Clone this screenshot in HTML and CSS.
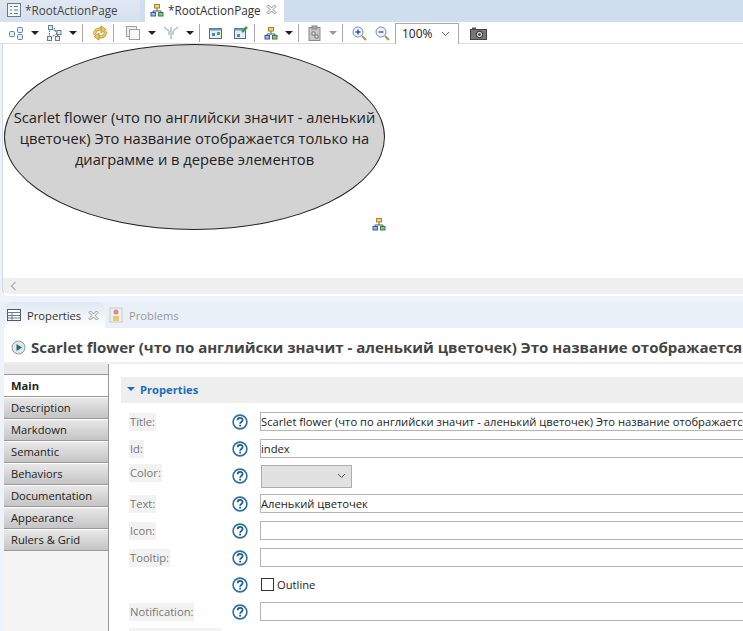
FILE: index.html
```html
<!DOCTYPE html>
<html>
	<head>
		<meta charset="UTF-8">
		<title>RootActionPage</title>
		<link rel="stylesheet" href="styles.css">
	</head>
	<body>
		<svg class="defs" width="0" height="0">
			<symbol id="org" viewBox="0 0 14 14">
				<path d="M7 5v3M3 10V8h8v2" fill="none" stroke="#3a5a8c"/>
				<rect x="4.500" y="1.500" width="5" height="3.500" fill="#f5d36a" stroke="#a8862c"/>
				<rect x="1" y="9.500" width="4.500" height="3.500" fill="#9db9e6" stroke="#3a5a9c"/>
				<rect x="8.500" y="9.500" width="4.500" height="3.500" fill="#8cc084" stroke="#3f7a3a"/>
			</symbol>
			<symbol id="help" viewBox="0 0 16 16">
				<circle cx="8" cy="8" r="6.900" fill="#fff" stroke="#2f6f9f" stroke-width="1.600"/>
				<path d="M5.600 6.300c0-3.200 5-3.200 5-.2 0 1.900-2.500 1.800-2.500 3.700" fill="none" stroke="#1f5c8c" stroke-width="1.800"/>
				<rect x="7.200" y="10.700" width="1.800" height="1.800" fill="#1f5c8c"/>
			</symbol>
			<symbol id="close" viewBox="0 0 11 11">
				<path d="M1 2.500 2.500 1 5.500 4 8.500 1 10 2.500 7 5.500 10 8.500 8.500 10 5.500 7 2.500 10 1 8.500 4 5.500 1 2.500Z" fill="#fff" stroke="#8a8a8a"/>
			</symbol>
		</svg>

		<div class="editor">
			<div class="tabs">
				<div class="tab tab-off">
					<svg class="tab-ico" width="14" height="14" viewBox="0 0 14 14"><rect x=".5" y=".5" width="13" height="13" fill="#f4f6f8" stroke="#6a7a8a"/><path d="M3 3.500h2M7 3.500h4M3 7h2M7 7h4M3 10.500h2M7 10.500h4" stroke="#4f8a6a" stroke-width="1.200"/></svg>
					<span>*RootActionPage</span>
				</div>
				<div class="tab tab-on">
					<svg class="tab-ico" width="14" height="14"><use href="#org"/></svg>
					<span>*RootActionPage</span>
					<svg class="tab-x" width="11" height="11"><use href="#close"/></svg>
				</div>
			</div>

			<div class="toolbar">
				<svg class="ico first" width="16" height="16" viewBox="0 0 16 16"><g fill="#e6eef8" stroke="#5c7f9f"><rect x="1.500" y="6.500" width="5" height="5" rx="1"/><rect x="9.500" y="2.500" width="5" height="5" rx="1"/><rect x="9.500" y="9.500" width="5" height="5" rx="1"/></g></svg>
				<i class="arr"></i>
				<svg class="ico" width="16" height="16" viewBox="0 0 16 16"><path d="M4 3 13 8M4 3 3 13M13 8 3 13M8 3l5 10" stroke="#555" stroke-dasharray="1.500 1" fill="none"/><g fill="#e6eef8" stroke="#5c7f9f"><rect x="2.500" y=".5" width="4" height="4"/><rect x="11" y="5.500" width="4" height="4"/><rect x="1.500" y="11.500" width="4" height="4"/><rect x="9.500" y="11.500" width="4" height="4"/></g></svg>
				<i class="arr"></i>
				<i class="sep"></i>
				<svg class="ico after-sep" width="16" height="16" viewBox="0 0 16 16"><g id="sync-half"><path d="M2.500 9.500C2.500 6 5.500 3.500 9 4.200" fill="none" stroke="#a8862c" stroke-width="3"/><path d="M2.500 9.500C2.500 6 5.500 3.500 9 4.200" fill="none" stroke="#f3cb55" stroke-width="1.800"/><path d="M9 .8 14 4.500 9 8Z" fill="#f3cb55" stroke="#a8862c" stroke-width=".8"/></g><use href="#sync-half" transform="rotate(180 8 8)"/></svg>
				<i class="sep"></i>
				<svg class="ico after-sep wide" width="16" height="16" viewBox="0 0 16 16"><rect x="1.500" y="1.500" width="10" height="10" fill="#eee" stroke="#9aa0a6"/><rect x="4.500" y="4.500" width="10" height="10" fill="#f8f8f8" stroke="#9aa0a6"/></svg>
				<i class="arr"></i>
				<svg class="ico" width="16" height="16" viewBox="0 0 16 16"><path d="M1 2 6 6M15 2l-5 4M8 2v5M6 6v4M10 6v4M8 7v7" stroke="#a9c3cf" stroke-width="1.500" fill="none"/></svg>
				<i class="arr"></i>
				<i class="sep"></i>
				<svg class="ico after-sep" width="14" height="14" viewBox="0 0 14 14"><rect x=".5" y="2.500" width="12" height="10" fill="#e4edf4" stroke="#5a6a7a"/><rect x=".5" y="2.500" width="12" height="2" fill="#6f94b8"/><rect x="3" y="7" width="3" height="3" fill="#4a8ac0"/><rect x="8" y="6" width="3" height="3" fill="#4fa050"/></svg>
				<svg class="ico gap-two" width="16" height="16" viewBox="0 0 16 16"><rect x="1.500" y="3.500" width="11" height="10" fill="#e4edf4" stroke="#5a6a7a"/><rect x="1.500" y="3.500" width="11" height="2" fill="#6f94b8"/><path d="M9 7 14 2" stroke="#3c9a50" stroke-width="2.500"/><rect x="4" y="9" width="3" height="3" fill="#4a8ac0"/></svg>
				<i class="sep"></i>
				<svg class="ico after-sep" width="14" height="14"><use href="#org"/></svg>
				<i class="arr"></i>
				<i class="sep"></i>
				<svg class="ico after-sep" width="14" height="16" viewBox="0 0 14 16"><rect x="1" y="2.500" width="11" height="13" fill="#c8c8c8" stroke="#8a8a8a"/><rect x="4" y="1" width="5" height="3" fill="#aaa" stroke="#888"/><path d="M4 7h3v3H4zM7 10h3v3H7z" fill="#eee" stroke="#777"/></svg>
				<i class="arr arr-off"></i>
				<i class="sep"></i>
				<svg class="ico after-sep" width="15" height="15" viewBox="0 0 15 15"><circle cx="6" cy="6" r="5" fill="#eef3fa" stroke="#7a8aa8"/><path d="M3.500 6h5M6 3.500v5" stroke="#2f4f9f" stroke-width="1.300"/><path d="m10 10 4 4" stroke="#a89060" stroke-width="2"/></svg>
				<svg class="ico zoom-out" width="15" height="15" viewBox="0 0 15 15"><circle cx="6" cy="6" r="5" fill="#eef3fa" stroke="#7a8aa8"/><path d="M3.500 6h5" stroke="#2f4f9f" stroke-width="1.300"/><path d="m10 10 4 4" stroke="#a89060" stroke-width="2"/></svg>
				<div class="zoom-box">
					<span>100%</span>
					<svg width="9" height="6" viewBox="0 0 9 6"><path d="m1 1 3.500 3.500L8 1" fill="none" stroke="#666"/></svg>
				</div>
				<svg class="camera" width="17" height="13" viewBox="0 0 17 13"><rect x=".5" y="2.500" width="16" height="10" fill="#777" stroke="#444"/><rect x="2" y=".5" width="4" height="2" fill="#555"/><circle cx="9.500" cy="7.500" r="3.200" fill="#ddd" stroke="#222"/><circle cx="9.500" cy="7.500" r="1.300" fill="#333"/></svg>
			</div>

			<div class="canvas">
				<div class="flower">Scarlet flower (что по английски значит - аленький цветочек) Это название отображается только на диаграмме и в дереве элементов</div>
				<svg class="marker" width="14" height="14"><use href="#org"/></svg>
			</div>
			<div class="hscroll">
				<svg width="7" height="10" viewBox="0 0 7 10"><path d="M5.500 1 1.500 5l4 4" fill="none" stroke="#b4b4b4" stroke-width="1.500"/></svg>
			</div>
		</div>

		<div class="panel">
			<div class="tabs panel-tabs">
				<div class="ptab ptab-on">
					<svg width="14" height="12" viewBox="0 0 14 12"><rect x=".5" y=".5" width="13" height="11" fill="#fff" stroke="#4a5a6a"/><path d="M.5 3.500h13M.5 6.500h13M.5 9h13M5 3v8" stroke="#6a7a8a"/></svg>
					<span>Properties</span>
					<svg class="tab-x" width="11" height="11"><use href="#close"/></svg>
				</div>
				<div class="ptab ptab-off">
					<svg width="14" height="16" viewBox="0 0 14 16"><rect x="1" y="1" width="12" height="14" fill="#eee" stroke="#ccc"/><circle cx="7" cy="5" r="2.500" fill="#d98a8a"/><path d="M4 14V9h6v5z" fill="#e6c878"/></svg>
					<span>Problems</span>
				</div>
			</div>

			<div class="head">
				<svg width="15" height="15" viewBox="0 0 15 15"><circle cx="7.500" cy="7.500" r="6.500" fill="#dfe8ea" stroke="#8a9aa0"/><path d="M5.500 4 11 7.500 5.500 11Z" fill="#1f6f6a"/></svg>
				<h2>Scarlet flower (что по английски значит - аленький цветочек) Это название отображается</h2>
			</div>

			<div class="body">
				<ul class="side">
					<li class="side-top"></li>
					<li class="side-on">Main</li>
					<li>Description</li>
					<li>Markdown</li>
					<li>Semantic</li>
					<li>Behaviors</li>
					<li>Documentation</li>
					<li>Appearance</li>
					<li>Rulers &amp; Grid</li>
				</ul>

				<div class="main">
					<div class="section">
						<i class="twisty"></i>
						<span>Properties</span>
					</div>
					<div class="form">
						<label class="lbl">Title:</label>
						<svg class="help" width="16" height="16"><use href="#help"/></svg>
						<div class="field">Scarlet flower (что по английски значит - аленький цветочек) Это название отображается</div>

						<label class="lbl">Id:</label>
						<svg class="help" width="16" height="16"><use href="#help"/></svg>
						<div class="field">index</div>

						<label class="lbl lbl-up">Color:</label>
						<svg class="help" width="16" height="16"><use href="#help"/></svg>
						<div class="combo">
							<svg width="9" height="6" viewBox="0 0 9 6"><path d="m1 1 3.500 3.500L8 1" fill="none" stroke="#555"/></svg>
						</div>

						<label class="lbl">Text:</label>
						<svg class="help" width="16" height="16"><use href="#help"/></svg>
						<div class="field">Аленький цветочек</div>

						<label class="lbl">Icon:</label>
						<svg class="help" width="16" height="16"><use href="#help"/></svg>
						<div class="field"></div>

						<label class="lbl">Tooltip:</label>
						<svg class="help" width="16" height="16"><use href="#help"/></svg>
						<div class="field"></div>

						<span></span>
						<svg class="help" width="16" height="16"><use href="#help"/></svg>
						<div class="check"><i class="box"></i>Outline</div>

						<label class="lbl">Notification:</label>
						<svg class="help" width="16" height="16"><use href="#help"/></svg>
						<div class="field"></div>

						<label class="lbl lbl-last"></label>
					</div>
				</div>
			</div>
		</div>
	</body>
</html>
```

FILE: styles.css
```css
html, body {
	margin: 0;
	padding: 0;
	height: 100%;
}
body {
	width: 743px;
	height: 631px;
	overflow: hidden;
	background: #fff;
	color: #222;
	font-family: "Open Sans", "Liberation Sans", sans-serif;
	font-size: 11.2px;
}
.defs {
	position: absolute;
}

/* editor */
.editor {
	height: 296px;
	background: #eef3f9;
	overflow: hidden;
}
.tabs {
	display: flex;
	height: 22px;
	background: #cfdeef;
}
.tab {
	display: flex;
	align-items: center;
	height: 22px;
	padding-bottom: 3px;
	box-sizing: border-box;
	font-size: 11.7px;
	white-space: nowrap;
}
.tab-off {
	width: 140px;
	padding-left: 7px;
	background: linear-gradient(#dfe8f2, #d5e1ee);
	margin-right: 5px;
	color: #444;
}
.tab-on {
	width: 139px;
	padding-left: 5px;
	padding-right: 7px;
	background: #fff;
	color: #333;
}
.tab-ico {
	margin-right: 4px;
}
.tab-x {
	margin-left: auto;
}

.toolbar {
	display: flex;
	align-items: center;
	height: 22px;
	padding-top: 1px;
	background: #fff;
	border-bottom: 1px solid #ddd;
	box-sizing: border-box;
}
.ico {
	flex: none;
	margin-left: 7px;
}
.first {
	margin-left: 8px;
}
.after-sep {
	margin-left: 9px;
}
.wide {
	margin-left: 11px;
}
.gap-two {
	margin-left: 10px;
}
.zoom-out {
	margin-left: 8px;
}
.arr {
	flex: none;
	width: 0;
	height: 0;
	margin-left: 7px;
	border-top: 4px solid #222;
	border-left: 4px solid transparent;
	border-right: 4px solid transparent;
}
.arr-off {
	border-top-color: #999;
}
.sep {
	flex: none;
	width: 1px;
	height: 18px;
	margin-left: 5px;
	background: #aaa;
}
.zoom-box {
	display: flex;
	align-items: center;
	justify-content: space-between;
	width: 64px;
	height: 21px;
	margin-left: 5px;
	padding: 0 8px 0 6px;
	box-sizing: border-box;
	border: 1px solid #aaa;
	border-bottom: 0;
	background: #fff;
	font-size: 12px;
}
.camera {
	margin-left: 11px;
}

.canvas {
	position: relative;
	height: 234px;
	border-left: 1px solid #d8d8d8;
	margin-left: 2px;
	background: #fff;
}
.flower {
	position: absolute;
	left: 1px;
	top: 0;
	width: 381px;
	height: 186px;
	padding-top: 2px;
	box-sizing: border-box;
	display: flex;
	align-items: center;
	justify-content: center;
	text-align: center;
	border: 1px solid #222;
	border-radius: 50%;
	background: #d3d3d3;
	font-size: 14.7px;
	line-height: 21px;
	color: #222;
}
.marker {
	position: absolute;
	left: 369px;
	top: 173px;
}
.hscroll {
	display: flex;
	align-items: center;
	height: 18px;
	margin-left: 2px;
	padding-left: 7px;
	box-sizing: border-box;
	background: #f0f0f0;
	border-left: 1px solid #d8d8d8;
	border-bottom: 2px solid #fff;
	border-bottom-left-radius: 7px;
}

/* properties panel */
.panel {
	padding-top: 6px;
	background: #eef3f9;
}
.panel-tabs {
	height: 26px;
	padding-left: 5px;
	background: #eaf0f7;
}
.ptab {
	display: flex;
	align-items: center;
	gap: 6px;
	height: 26px;
	box-sizing: border-box;
	white-space: nowrap;
}
.ptab-on {
	width: 100px;
	padding-left: 2px;
	background: linear-gradient(#dfe8f2, #fff);
	border-radius: 8px 8px 0 0;
	color: #333;
}
.ptab-on .tab-x {
	margin-left: 1px;
}
.ptab-off {
	padding-left: 4px;
	color: #999;
}
.head {
	display: flex;
	align-items: center;
	gap: 5px;
	height: 36px;
	margin-left: 4px;
	padding: 4px 0 0 7px;
	background: #fff;
	border-bottom: 2px solid #eee;
	box-sizing: border-box;
	overflow: hidden;
}
.head svg {
	flex: none;
}
.head h2 {
	margin: 0;
	font-size: 15px;
	font-weight: 700;
	color: #444;
	white-space: nowrap;
}
.body {
	display: flex;
	height: 268px;
	margin-left: 4px;
	background: #fff;
}
.side {
	flex: none;
	width: 104px;
	margin: 0;
	padding: 0;
	list-style: none;
	background: #f4f4f4;
	border-right: 1px solid #999;
}
.side li {
	height: 22px;
	line-height: 20px;
	box-sizing: border-box;
	padding-left: 7px;
	background: linear-gradient(#e8e8e8, #c4c4c4);
	border-bottom: 1px solid #999;
	border-top: 1px solid #fff;
}
.side .side-top {
	height: 11px;
	background: #e8e8e8;
	border-top: 0;
}
.side .side-on {
	background: #fff;
	font-weight: 700;
}
.main {
	flex: 1;
	min-width: 0;
	padding: 13px 0 0 12px;
	overflow: hidden;
}
.section {
	display: flex;
	align-items: center;
	gap: 5px;
	height: 26px;
	padding: 0 0 2px 6px;
	box-sizing: border-box;
	background: #eee;
	color: #1c6fb4;
	font-weight: 700;
}
.twisty {
	width: 0;
	height: 0;
	border-top: 4px solid #1c6fb4;
	border-left: 4px solid transparent;
	border-right: 4px solid transparent;
}
.form {
	display: grid;
	grid-template-columns: 91px 16px 500px;
	grid-template-rows: 19px 19px 20px 19px 19px 19px 19px 19px 19px;
	column-gap: 12px;
	row-gap: 8px;
	align-items: center;
	margin-top: 9px;
	padding-left: 8px;
	width: 700px;
}
.lbl {
	justify-self: start;
	padding: 0 1px;
	background: #f2f2f2;
	color: #777;
	line-height: 18px;
}
.lbl-up {
	align-self: start;
	margin-top: -2px;
}
.lbl-last {
	align-self: start;
	width: 90px;
	height: 10px;
	margin-top: -1px;
}
.help {
	justify-self: center;
}
.field {
	height: 19px;
	width: 490px;
	box-sizing: border-box;
	border: 1px solid #b4b4b4;
	line-height: 17px;
	white-space: nowrap;
	overflow: hidden;
}
.combo {
	display: flex;
	align-items: center;
	justify-content: flex-end;
	width: 91px;
	height: 23px;
	margin-left: 1px;
	padding-right: 5px;
	box-sizing: border-box;
	background: #e1e1e1;
	border: 1px solid #adadad;
}
.check {
	display: flex;
	align-items: center;
	gap: 3px;
}
.box {
	width: 11px;
	height: 11px;
	border: 1px solid #333;
	background: #fff;
	margin-left: 1px;
}
```
